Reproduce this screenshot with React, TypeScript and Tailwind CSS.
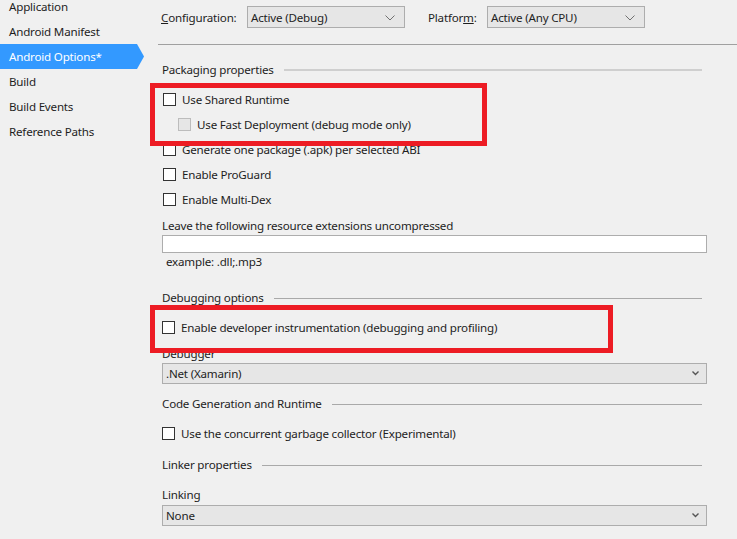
import React from "react";

const navItems = [
  "Application",
  "Android Manifest",
  "Android Options*",
  "Build",
  "Build Events",
  "Reference Paths",
];

function Chevron({ small }: { small?: boolean }) {
  return small ? (
    <svg width="7" height="5" viewBox="0 0 7 5" className="shrink-0">
      <path d="M0.5 0.5 L3.5 3.5 L6.5 0.5" fill="none" stroke="#555" strokeWidth="1.4" />
    </svg>
  ) : (
    <svg width="10" height="6" viewBox="0 0 10 6" className="shrink-0">
      <path d="M0.5 0.5 L5 5 L9.5 0.5" fill="none" stroke="#707070" strokeWidth="1" />
    </svg>
  );
}

function Combo({ value, className, small }: { value: string; className: string; small?: boolean }) {
  return (
    <div
      className={`flex items-center justify-between border border-[#adadad] bg-[#e6e6e6] pl-[3px] ${
        small ? "pr-[7px]" : "pr-[9px]"
      } ${className}`}
    >
      <span>{value}</span>
      <Chevron small={small} />
    </div>
  );
}

function Section({ title, className, light }: { title: string; className: string; light?: boolean }) {
  return (
    <div className={`flex h-[20px] items-center gap-[10px] pr-[5px] ${className}`}>
      <span>{title}</span>
      <div className={`flex-1 ${light ? "h-[2px] bg-[#cfcfcf]" : "h-px bg-[#a9a9a9]"}`} />
    </div>
  );
}

function Check({ label, disabled, className }: { label: string; disabled?: boolean; className?: string }) {
  return (
    <div className={`flex h-[25px] items-center ${className ?? ""}`}>
      <div
        className={`h-[13px] w-[13px] shrink-0 border ${
          disabled ? "border-[#bcbcbc] bg-[#e6e6e6]" : "border-[#333] bg-white"
        }`}
      />
      <span className="ml-[6px]">{label}</span>
    </div>
  );
}

export default function App() {
  return (
    <div
      className="relative flex h-[539px] w-[737px] overflow-hidden bg-[#f0f0f0] text-[11.6px] tracking-[-0.2px] text-[#1e1e1e]"
      style={{ fontFamily: '"Segoe UI", "Noto Sans", sans-serif' }}
    >
      {/* side navigation */}
      <div className="w-[158px] shrink-0">
        <div className="mt-[-6px]">
          {navItems.map((item) => {
            const active = item === "Android Options*";
            return (
              <div key={item} className="relative flex h-[25px] items-center">
                <div
                  className={`flex h-full w-[137px] items-center pl-[9px] pt-px ${
                    active ? "bg-[#3399ff] text-white" : ""
                  }`}
                >
                  {item}
                </div>
                {active && (
                  <svg width="7" height="25" viewBox="0 0 7 25" className="absolute left-[137px] top-0">
                    <path d="M0 0 L0 25 L7 12.5 Z" fill="#3399ff" />
                  </svg>
                )}
              </div>
            );
          })}
        </div>
      </div>

      {/* main */}
      <div className="flex-1">
        <div className="flex h-[44px] items-start pt-[7px] pl-[3px]">
          <div className="flex h-[22px] items-center">
            <span>
              <span className="underline">C</span>onfiguration:
            </span>
          </div>
          <Combo value="Active (Debug)" className="absolute left-[247px] top-[6px] h-[22px] w-[158px] pt-px" />
          <div className="absolute left-[428px] top-[7px] flex h-[22px] items-center">
            <span>
              Platfor<span className="underline">m</span>:
            </span>
          </div>
          <Combo value="Active (Any CPU)" className="absolute left-[487px] top-[6px] h-[22px] w-[158px] pt-px" />
        </div>
        <div className="h-px bg-[#a0a0a0]" />

        <div className="w-[549px] pl-[4px]">
          <Section title="Packaging properties" light className="mt-[15px]" />
          <div className="mt-[7px]">
            <Check label="Use Shared Runtime" className="ml-[1px]" />
            <Check label="Use Fast Deployment (debug mode only)" disabled className="ml-[16px]" />
            <Check label="Generate one package (.apk) per selected ABI" className="ml-[1px]" />
            <Check label="Enable ProGuard" className="ml-[1px]" />
            <Check label="Enable Multi-Dex" className="ml-[1px]" />
          </div>
          <div className="mt-[5px] flex h-[18px] items-center">Leave the following resource extensions uncompressed</div>
          <div className="h-[18px] w-[545px] border border-[#adadad] bg-white" />
          <div className="flex h-[18px] items-center pl-[4px]">example: .dll;.mp3</div>

          <Section title="Debugging options" className="mt-[17px]" />
          <Check label="Enable developer instrumentation (debugging and profiling)" className="mt-[7px]" />
          <div className="mt-[5px] flex h-[18px] items-center">Debugger</div>
          <Combo value=".Net (Xamarin)" small className="h-[21px] w-[545px]" />

          <Section title="Code Generation and Runtime" className="mt-[10px]" />
          <Check label="Use the concurrent garbage collector (Experimental)" className="mt-[7px]" />

          <Section title="Linker properties" className="mt-[9px]" />
          <div className="mt-[11px] flex h-[18px] items-center">Linking</div>
          <Combo value="None" small className="mt-[1px] h-[21px] w-[545px]" />
          <div className="mt-[8px] flex h-[18px] items-center">Skip linking assemblies</div>
        </div>
      </div>

      {/* highlight boxes drawn over the form */}
      <div className="absolute left-[150px] top-[83px] h-[63px] w-[337px] border-[5px] border-[#ed1c24]" />
      <div className="absolute left-[150px] top-[305px] h-[48px] w-[463px] border-[5px] border-[#ed1c24]" />
    </div>
  );
}
